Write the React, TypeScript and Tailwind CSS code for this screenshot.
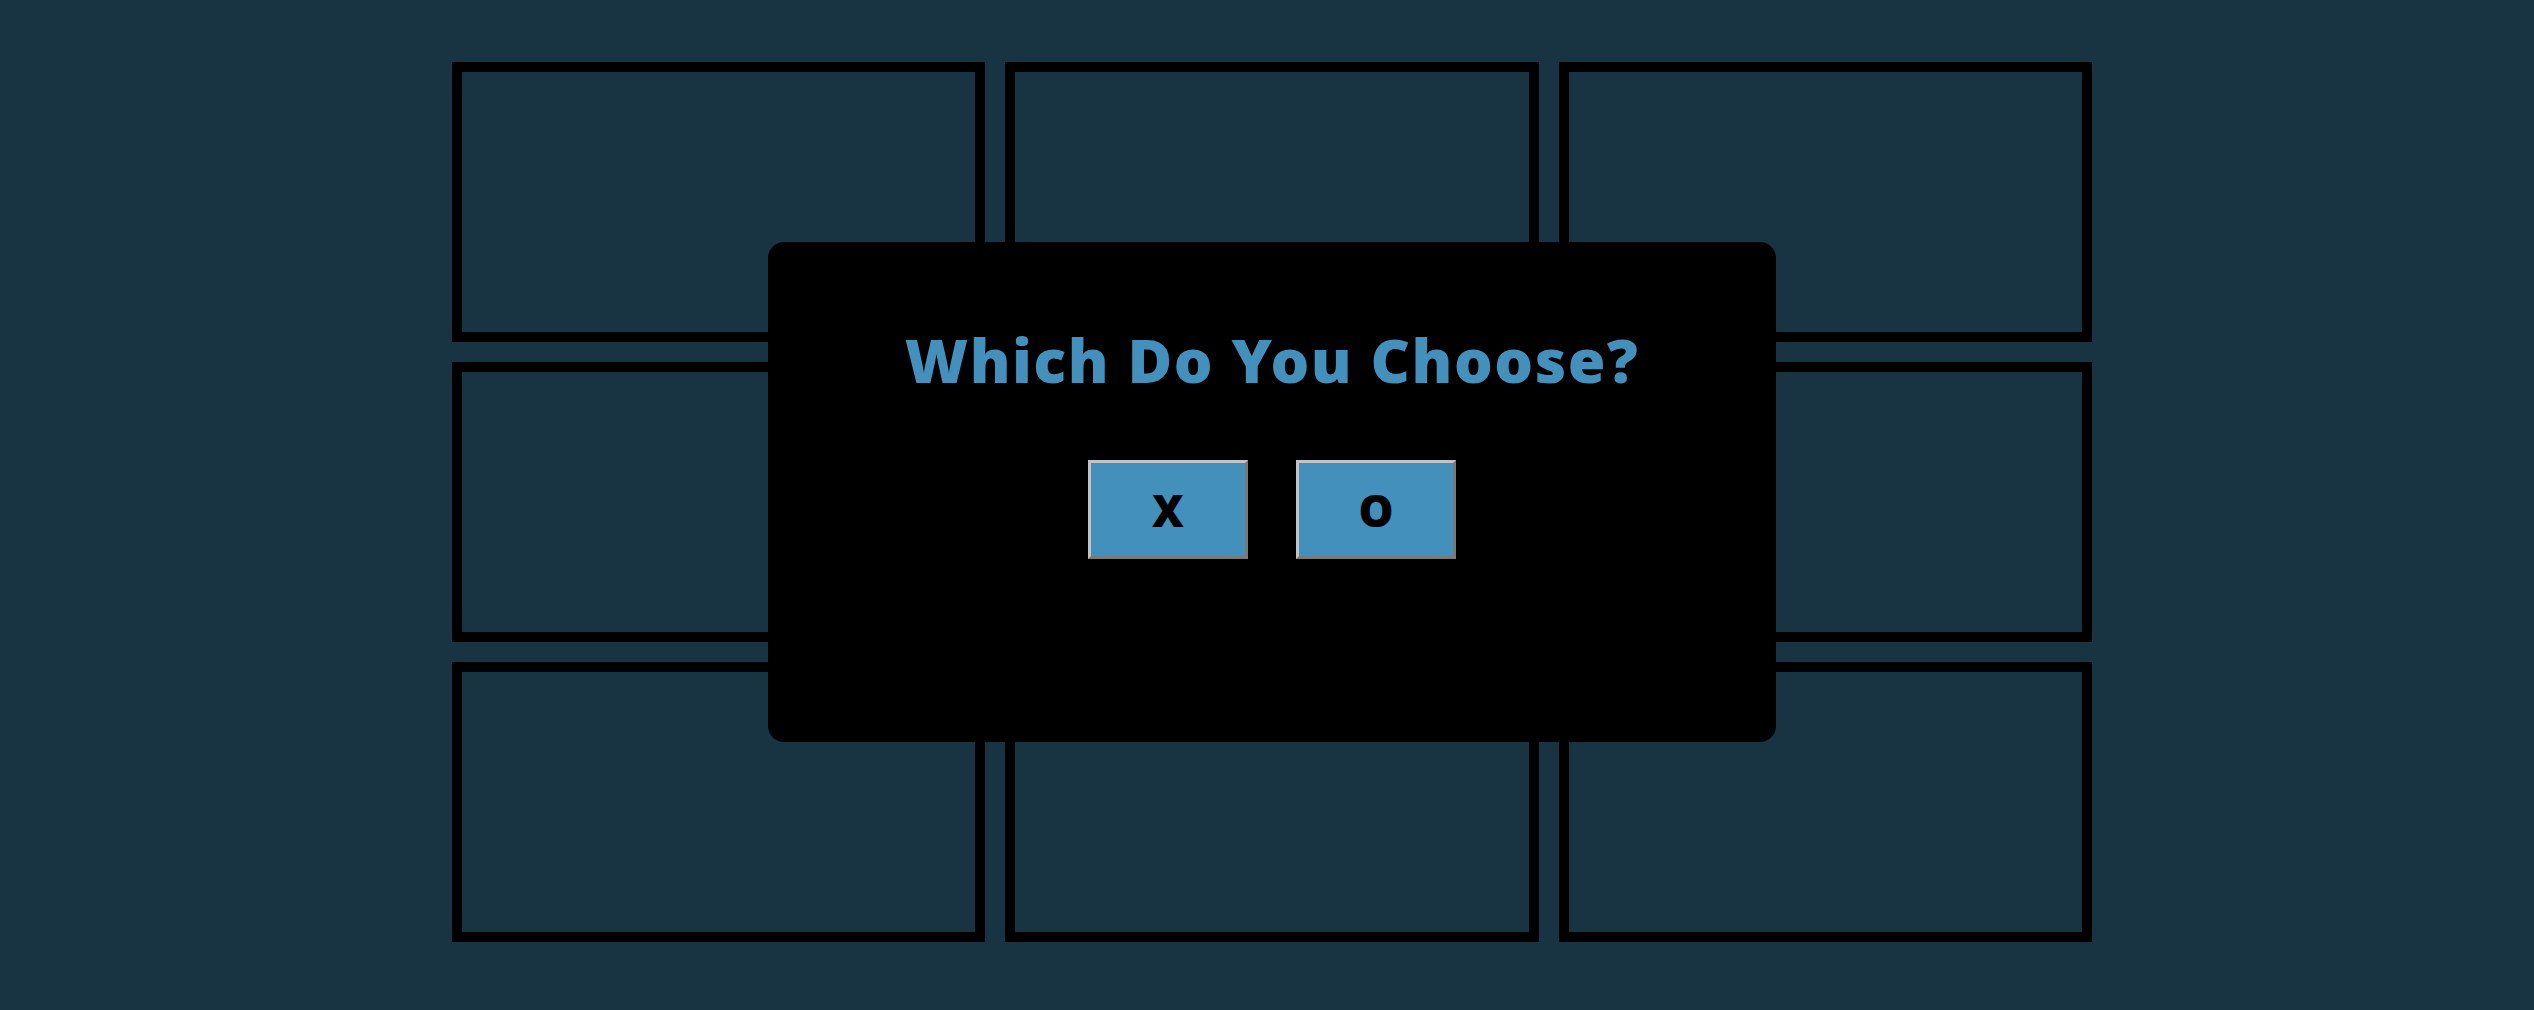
import React from 'react'

const cells = Array.from({ length: 9 })

export default function App() {
  return (
    <main className="relative min-h-screen h-[1010px] w-full overflow-hidden bg-[#183443] font-['Noto_Sans',sans-serif]">
      <div className="ml-[452px] pt-[62px] w-[1640px] grid grid-cols-3 gap-5">
        {cells.map((_, i) => (
          <div key={i} className="h-[280px] border-[10px] border-black" />
        ))}
      </div>

      {/* modal de elección */}
      <div className="absolute left-[768px] top-[242px] w-[1008px] h-[500px] bg-black rounded-2xl flex flex-col items-center">
        <h1 className="mt-[87px] text-[61px] leading-none font-black text-[#4290bb] tracking-[1.5px]">
          Which Do You Choose?
        </h1>
        <div className="mt-[70px] flex gap-12">
          <ChoiceButton label="X" />
          <ChoiceButton label="O" />
        </div>
      </div>
    </main>
  )
}

function ChoiceButton({ label }: { label: string }) {
  return (
    <button className="w-[160px] h-[99px] flex items-center justify-center bg-[#4290bb] border-[3px] border-t-[#c3c3c3] border-l-[#c3c3c3] border-b-[#7a7a7a] border-r-[#7a7a7a] text-[44px] font-black text-black leading-none">
      {label}
    </button>
  )
}
